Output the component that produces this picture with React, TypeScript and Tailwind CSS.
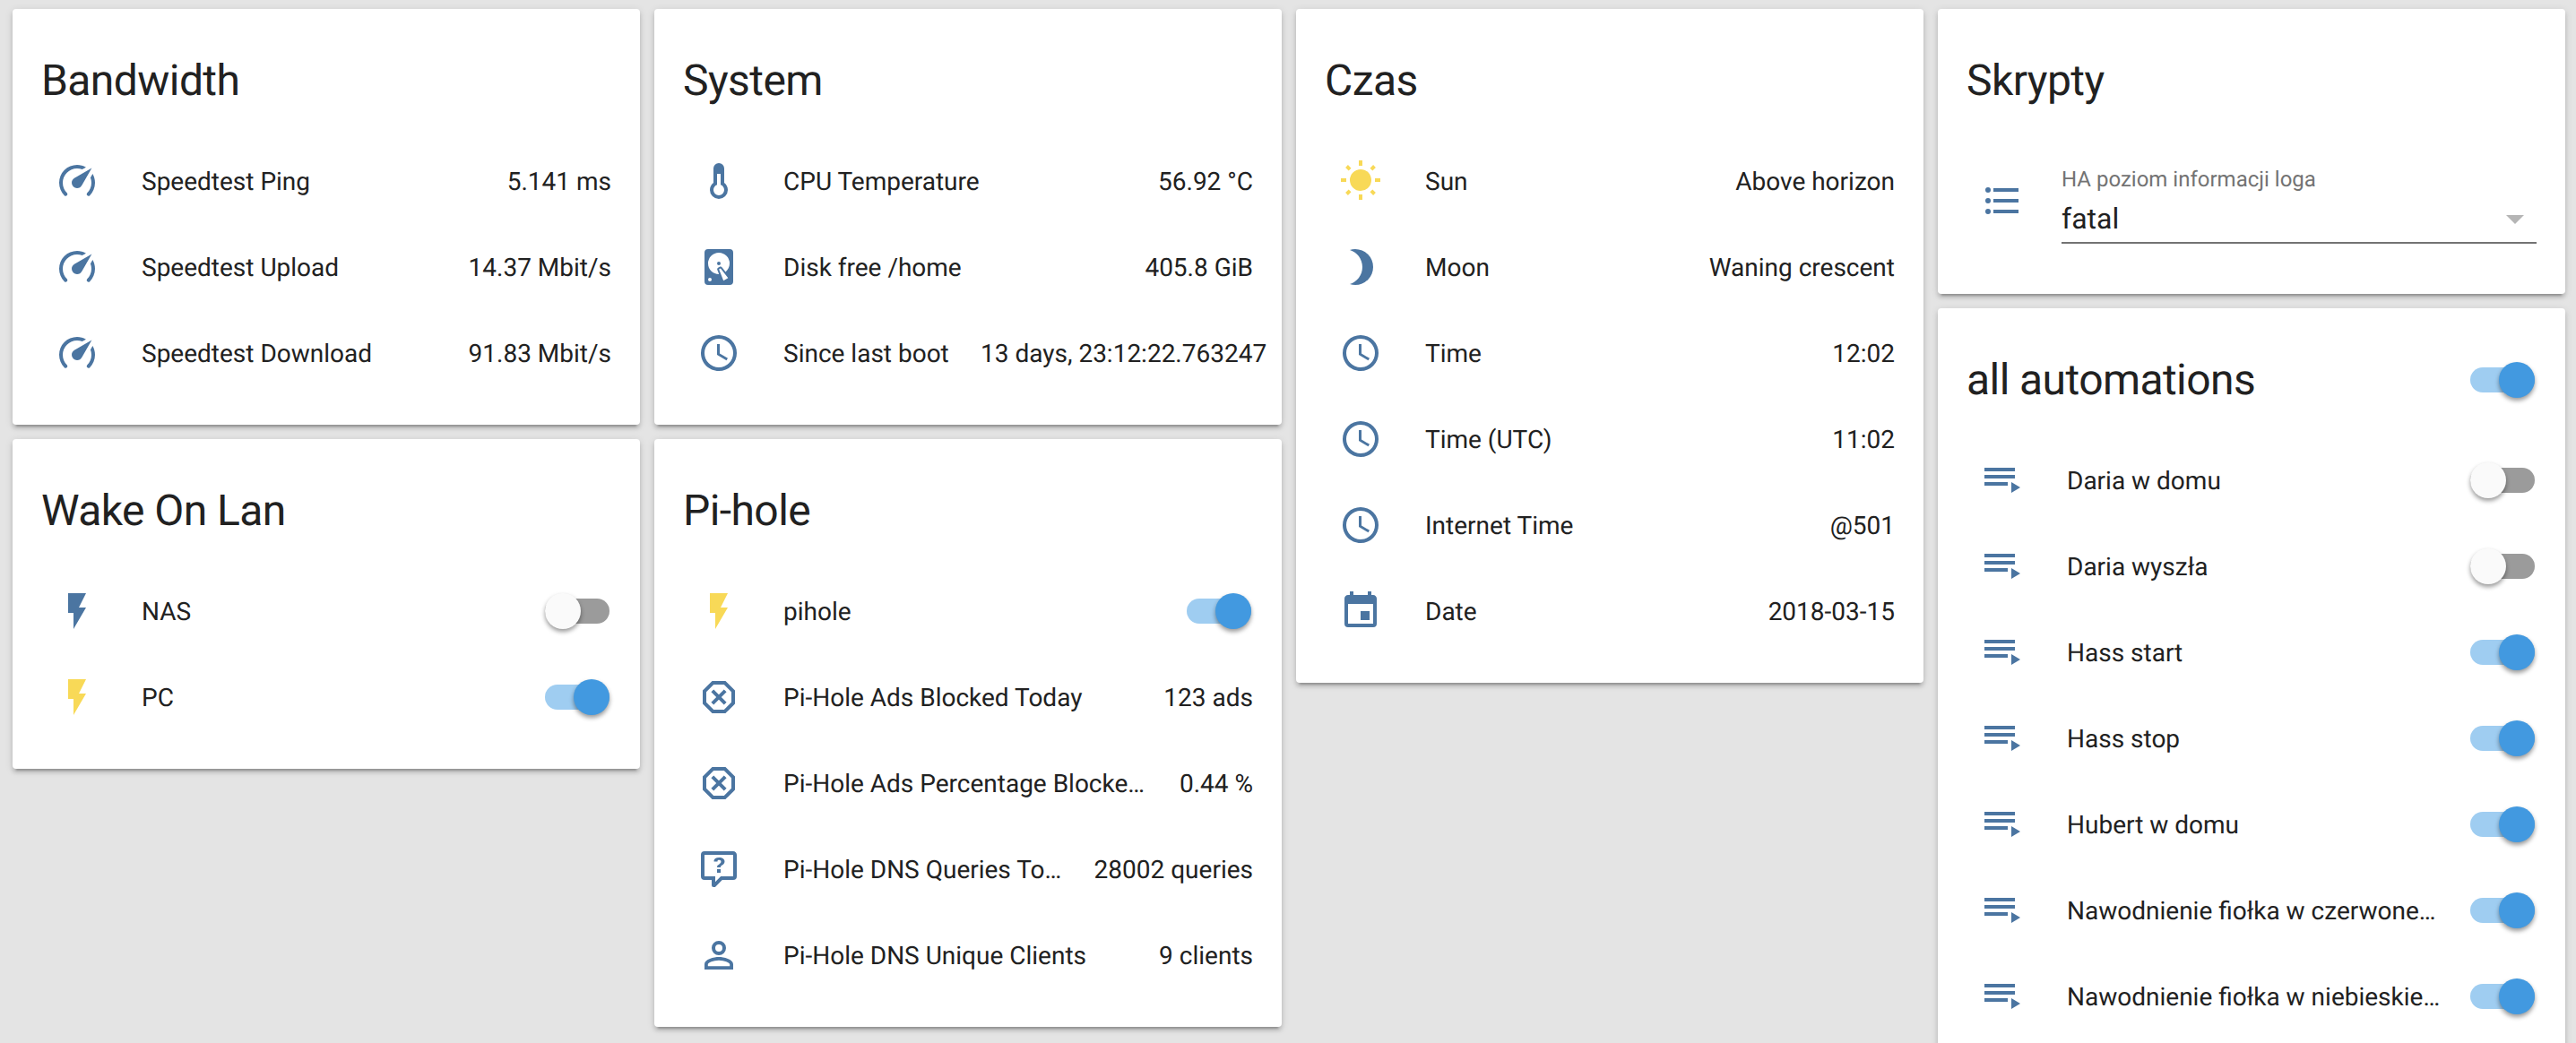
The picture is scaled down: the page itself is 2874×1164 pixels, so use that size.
import React from "react";

const P = {
  gauge: "M12,16A3,3 0 0,1 9,13C9,11.88 9.61,10.9 10.5,10.39L20.21,4.77L14.68,14.35C14.18,15.33 13.17,16 12,16M12,3C13.81,3 15.5,3.5 16.97,4.32L14.87,5.53C14,5.19 13,5 12,5A8,8 0 0,0 4,13C4,15.21 4.89,17.21 6.34,18.65H6.35C6.74,19.04 6.74,19.67 6.35,20.06C5.96,20.45 5.32,20.45 4.93,20.07V20.07C3.12,18.26 2,15.76 2,13A10,10 0 0,1 12,3M22,13C22,15.76 20.88,18.26 19.07,20.07V20.07C18.68,20.45 18.05,20.45 17.66,20.06C17.27,19.67 17.27,19.04 17.66,18.65V18.65C19.11,17.2 20,15.21 20,13C20,12 19.81,11 19.46,10.1L20.67,8C21.5,9.5 22,11.18 22,13Z",
  thermo: "M17,17A5,5 0 0,1 12,22A5,5 0 0,1 7,17C7,15.36 7.79,13.91 9,13V5A3,3 0 0,1 12,2A3,3 0 0,1 15,5V13C16.21,13.91 17,15.36 17,17M11,8V14.17C9.83,14.58 9,15.69 9,17A3,3 0 0,0 12,20A3,3 0 0,0 15,17C15,15.69 14.17,14.58 13,14.17V8H11Z",
  disk: "M6,2H18A2,2 0 0,1 20,4V20A2,2 0 0,1 18,22H6A2,2 0 0,1 4,20V4A2,2 0 0,1 6,2M12,4A6,6 0 0,0 6,10C6,13.31 8.69,16 12.1,16L11.22,13.77C10.95,13.29 11.11,12.68 11.59,12.4L12.45,11.9C12.93,11.63 13.54,11.79 13.82,12.27L15.74,14.69C17.12,13.59 18,11.9 18,10A6,6 0 0,0 12,4M12,9A1,1 0 0,1 13,10A1,1 0 0,1 12,11A1,1 0 0,1 11,10A1,1 0 0,1 12,9M7,18A1,1 0 0,0 6,19A1,1 0 0,0 7,20A1,1 0 0,0 8,19A1,1 0 0,0 7,18M12.09,13.27L14.58,19.58L17.17,18.08L12.95,12.77L12.09,13.27Z",
  clock: "M12,20A8,8 0 0,0 20,12A8,8 0 0,0 12,4A8,8 0 0,0 4,12A8,8 0 0,0 12,20M12,2A10,10 0 0,1 22,12A10,10 0 0,1 12,22C6.47,22 2,17.5 2,12A10,10 0 0,1 12,2M12.5,7V12.25L17,14.92L16.25,16.15L11,13V7H12.5Z",
  flash: "M7,2V13H10V22L17,10H13L17,2H7Z",
  octagon: "M8.27,3L3,8.27V15.73L8.27,21H15.73C17.5,19.24 21,15.73 21,15.73V8.27L15.73,3M9.1,5H14.9L19,9.1V14.9L14.9,19H9.1L5,14.9V9.1M9.12,7.71L7.71,9.12L10.59,12L7.71,14.88L9.12,16.29L12,13.41L14.88,16.29L16.29,14.88L13.41,12L16.29,9.12L14.88,7.71L12,10.59",
  question: "M4,2A2,2 0 0,0 2,4V16A2,2 0 0,0 4,18H8V21A1,1 0 0,0 9,22H9.5C9.75,22 10,21.9 10.2,21.71L13.9,18H20A2,2 0 0,0 22,16V4C22,2.89 21.1,2 20,2H4M4,4H20V16H13.08L10,19.08V16H4V4M12.19,5.5C11.3,5.5 10.59,5.68 10.05,6.04C9.5,6.4 9.22,7 9.27,7.69H11.24C11.24,7.41 11.34,7.2 11.5,7.06C11.7,6.92 11.92,6.85 12.19,6.85C12.5,6.85 12.77,6.93 12.95,7.11C13.13,7.28 13.22,7.5 13.22,7.8C13.22,8.08 13.14,8.33 13,8.54C12.83,8.76 12.62,8.94 12.36,9.08C11.84,9.4 11.5,9.68 11.29,9.92C11.1,10.16 11,10.5 11,11H13C13,10.72 13.05,10.5 13.14,10.32C13.23,10.15 13.4,10 13.66,9.85C14.12,9.64 14.5,9.36 14.79,9C15.08,8.63 15.23,8.24 15.23,7.8C15.23,7.1 14.96,6.54 14.42,6.12C13.88,5.71 13.13,5.5 12.19,5.5M11,12V14H13V12H11Z",
  account: "M12,4A4,4 0 0,1 16,8A4,4 0 0,1 12,12A4,4 0 0,1 8,8A4,4 0 0,1 12,4M12,6A2,2 0 0,0 10,8A2,2 0 0,0 12,10A2,2 0 0,0 14,8A2,2 0 0,0 12,6M12,13C14.67,13 20,14.33 20,17V20H4V17C4,14.33 9.33,13 12,13M12,14.9C9.03,14.9 5.9,16.36 5.9,17V18.1H18.1V17C18.1,16.36 14.97,14.9 12,14.9Z",
  sun: "M3.55,18.54L4.96,19.95L6.76,18.16L5.34,16.74M11,22.45C11.32,22.45 13,22.45 13,22.45V19.5H11M12,5.5A6,6 0 0,0 6,11.5A6,6 0 0,0 12,17.5A6,6 0 0,0 18,11.5C18,8.18 15.31,5.5 12,5.5M20,12.5H23V10.5H20M17.24,18.16L19.04,19.95L20.45,18.54L18.66,16.74M20.45,4.46L19.04,3.05L17.24,4.84L18.66,6.26M13,0.55H11V3.5H13M4,10.5H1V12.5H4M6.76,4.84L4.96,3.05L3.55,4.46L5.34,6.26L6.76,4.84Z",
  moon: "M9,2C7.95,2 6.95,2.16 6,2.46C10.06,3.73 13,7.5 13,12C13,16.5 10.06,20.27 6,21.54C6.95,21.84 7.95,22 9,22A10,10 0 0,0 19,12A10,10 0 0,0 9,2Z",
  calendar: "M19,19H5V8H19M16,1V3H8V1H6V3H5C3.89,3 3,3.89 3,5V19A2,2 0 0,0 5,21H19A2,2 0 0,0 21,19V5C21,3.89 20.1,3 19,3H18V1M17,12H12V17H17V12Z",
  list: "M7,5H21V7H7V5M7,13V11H21V13H7M4,4.5A1.5,1.5 0 0,1 5.5,6A1.5,1.5 0 0,1 4,7.5A1.5,1.5 0 0,1 2.5,6A1.5,1.5 0 0,1 4,4.5M4,10.5A1.5,1.5 0 0,1 5.5,12A1.5,1.5 0 0,1 4,13.5A1.5,1.5 0 0,1 2.5,12A1.5,1.5 0 0,1 4,10.5M7,19V17H21V19H7M4,16.5A1.5,1.5 0 0,1 5.5,18A1.5,1.5 0 0,1 4,19.5A1.5,1.5 0 0,1 2.5,18A1.5,1.5 0 0,1 4,16.5Z",
  playlist: "M19,9H2V11H19V9M19,5H2V7H19V5M2,15H15V13H2V15M17,13V19L22,16L17,13Z",
};

function Icon({ d, on }: { d: string; on?: boolean }) {
  return (
    <svg viewBox="0 0 24 24" className={on ? "h-12 w-12 shrink-0 fill-[#f8d957]" : "h-12 w-12 shrink-0 fill-[#4b75a1]"}>
      <path d={d} />
    </svg>
  );
}

function Toggle({ on }: { on: boolean }) {
  return (
    <div className="relative mr-[2px] flex h-10 w-[72px] shrink-0 items-center">
      <div className={on ? "h-7 w-full rounded-full bg-[#9fcdf1]" : "h-7 w-full rounded-full bg-[#9b9b9b]"} />
      <div
        className={
          on
            ? "absolute right-0 top-0 h-10 w-10 rounded-full bg-[#4299e0] shadow-[0_3px_5px_rgba(0,0,0,0.4)]"
            : "absolute left-0 top-0 h-10 w-10 rounded-full bg-[#fafafa] shadow-[0_3px_5px_rgba(0,0,0,0.4)]"
        }
      />
    </div>
  );
}

type RowData = { icon: string; on?: boolean; name: string; value?: string; toggle?: boolean };

function Row({ icon, on, name, value, toggle }: RowData) {
  return (
    <div className="flex h-24 items-center pl-4">
      <Icon d={icon} on={on} />
      <div className="mr-8 ml-12 min-w-[188px] flex-1 truncate pt-[2px]">{name}</div>
      {value !== undefined && <div className="shrink-0 whitespace-nowrap pt-[2px] text-right">{value}</div>}
      {toggle !== undefined && <Toggle on={toggle} />}
    </div>
  );
}

function Card({ title, toggle, children }: { title: string; toggle?: boolean; children: React.ReactNode }) {
  return (
    <div className="rounded bg-white px-8 pb-8 shadow-[0_4px_4px_0_rgba(0,0,0,0.14),0_2px_10px_0_rgba(0,0,0,0.12),0_6px_2px_-4px_rgba(0,0,0,0.2)]">
      <div className="flex items-center justify-between pt-12 pb-8 text-[48px] leading-[64px] tracking-[-0.012em]">
        <span>{title}</span>
        {toggle !== undefined && <Toggle on={toggle} />}
      </div>
      {children}
    </div>
  );
}

function Rows({ rows }: { rows: RowData[] }) {
  return (
    <>
      {rows.map((r) => (
        <Row key={r.name} {...r} />
      ))}
    </>
  );
}

export default function App() {
  return (
    <div className="flex h-[1164px] gap-4 overflow-hidden bg-[#e4e4e4] pt-[10px] pl-[14px] font-['Roboto',sans-serif] text-[28px] leading-10 text-[#212121] [text-rendering:geometricPrecision]">
      <div className="flex w-[700px] shrink-0 flex-col gap-4">
        <Card title="Bandwidth">
          <Rows
            rows={[
              { icon: P.gauge, name: "Speedtest Ping", value: "5.141 ms" },
              { icon: P.gauge, name: "Speedtest Upload", value: "14.37 Mbit/s" },
              { icon: P.gauge, name: "Speedtest Download", value: "91.83 Mbit/s" },
            ]}
          />
        </Card>
        <Card title="Wake On Lan">
          <Rows
            rows={[
              { icon: P.flash, name: "NAS", toggle: false },
              { icon: P.flash, on: true, name: "PC", toggle: true },
            ]}
          />
        </Card>
      </div>
      <div className="flex w-[700px] shrink-0 flex-col gap-4">
        <Card title="System">
          <Rows
            rows={[
              { icon: P.thermo, name: "CPU Temperature", value: "56.92 °C" },
              { icon: P.disk, name: "Disk free /home", value: "405.8 GiB" },
              { icon: P.clock, name: "Since last boot", value: "13 days, 23:12:22.763247" },
            ]}
          />
        </Card>
        <Card title="Pi-hole">
          <Rows
            rows={[
              { icon: P.flash, on: true, name: "pihole", toggle: true },
              { icon: P.octagon, name: "Pi-Hole Ads Blocked Today", value: "123 ads" },
              { icon: P.octagon, name: "Pi-Hole Ads Percentage Blocked Today", value: "0.44 %" },
              { icon: P.question, name: "Pi-Hole DNS Queries Today", value: "28002 queries" },
              { icon: P.account, name: "Pi-Hole DNS Unique Clients", value: "9 clients" },
            ]}
          />
        </Card>
      </div>
      <div className="flex w-[700px] shrink-0 flex-col gap-4">
        <Card title="Czas">
          <Rows
            rows={[
              { icon: P.sun, on: true, name: "Sun", value: "Above horizon" },
              { icon: P.moon, name: "Moon", value: "Waning crescent" },
              { icon: P.clock, name: "Time", value: "12:02" },
              { icon: P.clock, name: "Time (UTC)", value: "11:02" },
              { icon: P.clock, name: "Internet Time", value: "@501" },
              { icon: P.calendar, name: "Date", value: "2018-03-15" },
            ]}
          />
        </Card>
      </div>
      <div className="flex w-[700px] shrink-0 flex-col gap-4">
        <Card title="Skrypty">
          <div className="flex h-[142px] items-start pl-4">
            <div className="mt-[46px]">
              <Icon d={P.list} />
            </div>
            <div className="ml-[42px] flex-1 pt-[30px]">
              <div className="text-[24px] leading-8 text-[#737373]">HA poziom informacji loga</div>
              <div className="mt-[4px] flex h-[50px] justify-between text-[32px] leading-[48px]">
                <span>fatal</span>
                <svg viewBox="0 0 20 10" className="mt-[20px] mr-[14px] h-[10px] w-5 fill-[#b5b5b5]">
                  <path d="M0,0H20L10,10Z" />
                </svg>
              </div>
              <div className="h-[2px] bg-[#737373]" />
            </div>
          </div>
        </Card>
        <Card title="all automations" toggle={true}>
          <Rows
            rows={[
              { icon: P.playlist, name: "Daria w domu", toggle: false },
              { icon: P.playlist, name: "Daria wyszła", toggle: false },
              { icon: P.playlist, name: "Hass start", toggle: true },
              { icon: P.playlist, name: "Hass stop", toggle: true },
              { icon: P.playlist, name: "Hubert w domu", toggle: true },
              { icon: P.playlist, name: "Nawodnienie fiołka w czerwonej doniczce", toggle: true },
              { icon: P.playlist, name: "Nawodnienie fiołka w niebieskiej doniczce", toggle: true },
            ]}
          />
        </Card>
      </div>
    </div>
  );
}
